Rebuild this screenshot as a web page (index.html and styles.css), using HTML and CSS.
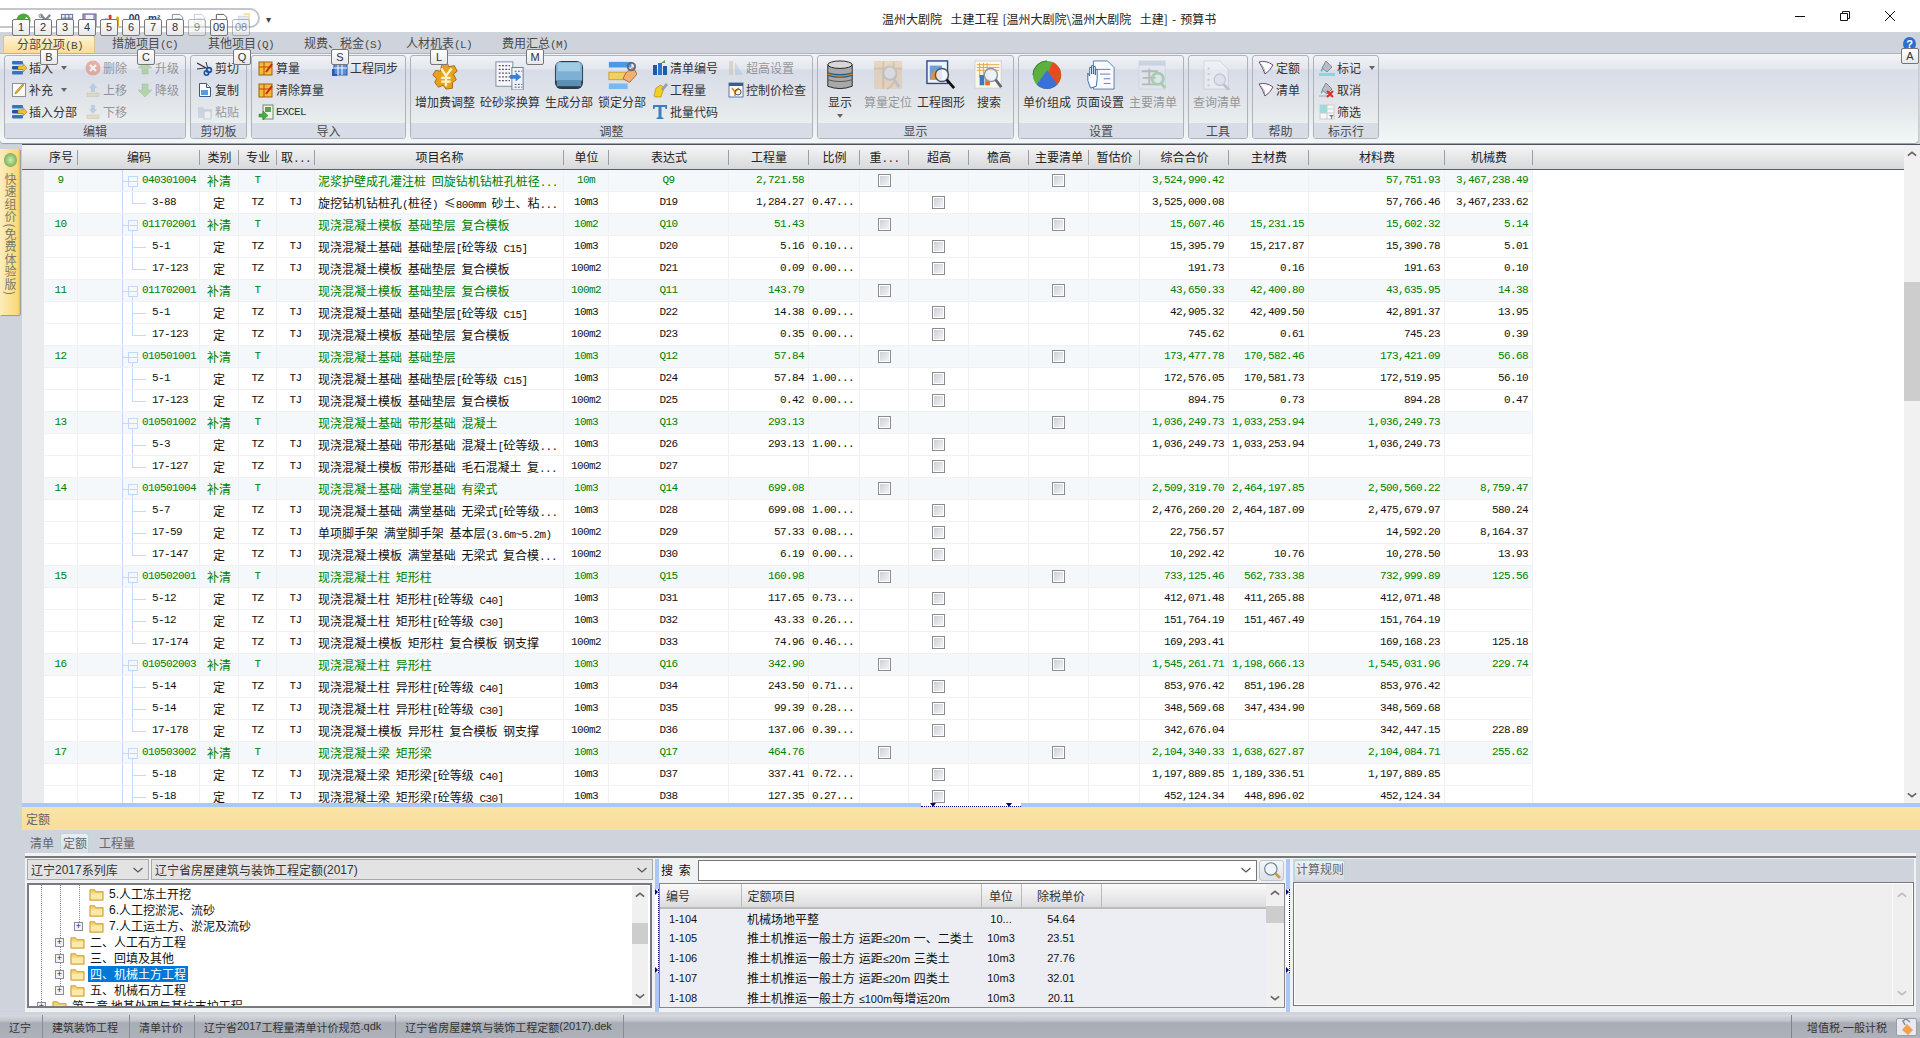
FILE: index.html
```html
<!DOCTYPE html>
<html lang="zh-CN">
<head>
<meta charset="utf-8">
<title>预算书</title>
<link rel="stylesheet" href="styles.css">
</head>
<body>
<svg class="defs" width="0" height="0">
<defs>
<symbol id="ok" viewBox="0 0 16 16"><circle cx="8" cy="8" r="7.5" fill="#4fa83a"/><path d="M4 8l3 3 5-6" stroke="#fff" stroke-width="2" fill="none"/></symbol>
<symbol id="tool" viewBox="0 0 16 16"><path d="M3 2l10 11M13 2L3 13" stroke="#808890" stroke-width="2.4"/><circle cx="3" cy="3" r="2" fill="none" stroke="#808890"/></symbol>
<symbol id="tbl" viewBox="0 0 16 16"><rect x="1.5" y="1.5" width="12" height="12" fill="#e8eef8" stroke="#5a6a90"/><path d="M1.5 5.5h12M1.5 9.500h12M5.500 1.500v12M9.500 1.500v12" stroke="#5a6a90"/></symbol>
<symbol id="flop" viewBox="0 0 16 16"><rect x="1" y="1" width="14" height="13" fill="#9a94c8" stroke="#6a6490"/><rect x="4" y="2" width="8" height="7" fill="#f4f4f8"/></symbol>
<symbol id="bars" viewBox="0 0 16 16"><rect x="1" y="6" width="3" height="8" fill="#2a62b8"/><rect x="5" y="2" width="3" height="12" fill="#d63a30"/><rect x="9" y="8" width="3" height="6" fill="#2a62b8"/><rect x="13" y="4" width="3" height="10" fill="#e8a820"/></symbol>
<symbol id="page" viewBox="0 0 16 16"><path d="M2.500 1.500h8l3 3v10h-11z" fill="#f6f8fc" stroke="#7a8aa8"/><path d="M5 6h6M5 9h6M5 12h6" stroke="#a8b4cc"/></symbol>
<symbol id="pageg" viewBox="0 0 16 16"><path d="M2.500 1.500h8l3 3v10h-11z" fill="#fdfdfd" stroke="#555"/><path d="M10 9h5v5h-5z" fill="#f4c850"/></symbol>
<symbol id="pagea" viewBox="0 0 16 16"><path d="M2.500 3.500h11v11h-11z" fill="#c4d4f0" stroke="#8aa0c8"/><path d="M8 1h6v7" fill="none" stroke="#e8c050" stroke-width="2"/></symbol>
<symbol id="ins" viewBox="0 0 16 16"><rect x="1" y="1" width="11" height="3.500" rx="1" fill="#2f76c8"/><rect x="1" y="6" width="11" height="3.500" rx="1" fill="#1d55a8"/><rect x="1" y="11" width="11" height="3.500" rx="1" fill="#2f76c8"/><path d="M7 6h5V3.500L16 8l-4 4V9.500H7z" fill="#f2c230" stroke="#8a7018" stroke-width=".5"/></symbol>
<symbol id="sup" viewBox="0 0 16 16"><rect x="1.500" y="1.500" width="13" height="13" fill="#fbfbf6" stroke="#8a8f98"/><path d="M4 12l2-1 7-8-1.500-1-7 8z" fill="#e2a838" stroke="#8a6a20" stroke-width=".5"/></symbol>
<symbol id="del" viewBox="0 0 16 16"><circle cx="8" cy="8" r="7.500" fill="#e06a48"/><path d="M5 5l6 6M11 5l-6 6" stroke="#fff" stroke-width="2.400"/></symbol>
<symbol id="mup" viewBox="0 0 16 16"><path d="M8 1l4 5H10v4H6V6H4z" fill="#8ab0d8"/><rect x="2" y="11" width="12" height="3.500" fill="#dcc890" stroke="#aa9a6a" stroke-width=".5"/></symbol>
<symbol id="mdn" viewBox="0 0 16 16"><path d="M8 10l4-5H10V1H6v4H4z" fill="#8ab0d8"/><rect x="2" y="11" width="12" height="3.500" fill="#dcc890" stroke="#aa9a6a" stroke-width=".5"/></symbol>
<symbol id="aup" viewBox="0 0 16 16"><path d="M8 2l7 6h-4v6H5V8H1z" fill="#7cc060" stroke="#5a9a40" stroke-width=".5"/></symbol>
<symbol id="adn" viewBox="0 0 16 16"><path d="M8 15l7-7h-4V2H5v6H1z" fill="#7cc060" stroke="#5a9a40" stroke-width=".5"/></symbol>
<symbol id="cut" viewBox="0 0 16 16"><path d="M0 3l11 6M0 9l8-1" stroke="#333" stroke-width="1.200"/><path d="M9 2l2 7" stroke="#333"/><circle cx="12" cy="10" r="2.400" fill="none" stroke="#1a4fa8" stroke-width="1.600"/><circle cx="9.500" cy="13" r="2.200" fill="none" stroke="#1a4fa8" stroke-width="1.600"/></symbol>
<symbol id="cpy" viewBox="0 0 16 16"><path d="M2.500 1.500h7l4 4v9h-11z" fill="#fff" stroke="#3a5a8a"/><rect x="4" y="8" width="7" height="5" fill="#5a9ae0"/><path d="M9.500 1.500v4h4" fill="#d8e4f4" stroke="#3a5a8a"/></symbol>
<symbol id="pst" viewBox="0 0 16 16"><path d="M1 3h5l1 2h8v9H1z" fill="#a8c0d8"/><rect x="7" y="7" width="7" height="8" fill="#f0f4f8" stroke="#9ab"/></symbol>
<symbol id="calc" viewBox="0 0 16 16"><rect x="1" y="2" width="13" height="13" fill="#f0c030" stroke="#a06018"/><path d="M1 7h13M6 2v13" stroke="#c84020"/><path d="M8 12l6-8" stroke="#d02020" stroke-width="2"/></symbol>
<symbol id="syn" viewBox="0 0 16 16"><rect x="2" y="4" width="13" height="11" fill="#5a8fd8" stroke="#2a5aa8"/><path d="M6 4v11M10 4v11M2 8h13" stroke="#fff"/><path d="M1 9v6h4" fill="none" stroke="#2a5aa8" stroke-width="2"/></symbol>
<symbol id="xl" viewBox="0 0 16 16"><rect x="5" y="1" width="10" height="14" fill="#eef4ea" stroke="#6a8a6a"/><rect x="7" y="3" width="6" height="5" fill="#5aa05a"/><path d="M1 10h4V7l5 4.500L5 16v-3H1z" fill="#46b03a" stroke="#2a7a20" stroke-width=".5"/></symbol>
<symbol id="yen" viewBox="0 0 32 32"><path d="M13 3l5-1 2 5 6-1 3 6-4 3 3 6-4 3v6l-7 1-3-4-5 2-4-5 2-4-4-4 3-5 5 1z" fill="#e8a020" stroke="#a86a10"/><path d="M12 9l5 8 6-8M17 17v11M12 19h10M12 23h10" stroke="#fff4c0" stroke-width="2.500" fill="none"/></symbol>
<symbol id="mor" viewBox="0 0 32 32"><rect x="1" y="2" width="18" height="26" fill="#f8f8fc" stroke="#7a8aa8"/><rect x="18" y="8" width="12" height="24" fill="#eef2fa" stroke="#6a7a98"/><path d="M4 6h12M4 10h12M4 14h12M4 18h12M4 22h12" stroke="#556" stroke-dasharray="2 1.500" stroke-width="1.500"/><path d="M21 12h8M21 26h8M21 29h8" stroke="#556" stroke-dasharray="2 1.500"/><path d="M16 16h6v-3l6 5-6 5v-3h-6z" fill="#3a80d8"/></symbol>
<symbol id="gen" viewBox="0 0 32 32"><rect x="1" y="1" width="30" height="30" rx="7" fill="#2c3a48"/><path d="M5 2h22q3 0 3 4v16H2V6q0-4 3-4z" fill="#7db0d4"/><path d="M3 22h26v6H3z" fill="#5a90b4"/><path d="M6 3h20q2 0 2 3v6H4V6q0-3 2-3z" fill="#a0cce4"/></symbol>
<symbol id="lock" viewBox="0 0 32 32"><rect x="2" y="2" width="24" height="6" fill="#4a98e8"/><rect x="2" y="13" width="20" height="8" fill="#f0d060" stroke="#c8a030"/><rect x="2" y="25" width="20" height="6" fill="#7ab8f0"/><path d="M20 14l8-6 4 7-8 9-7-4z" fill="#f0b070" stroke="#a86a30"/><circle cx="26" cy="7" r="4" fill="none" stroke="#667" stroke-width="2"/></symbol>
<symbol id="db" viewBox="0 0 32 32"><path d="M3 5h26v23q-13 5-26 0z" fill="#a8a8a8"/><ellipse cx="16" cy="5" rx="13" ry="4" fill="#d8d8d8" stroke="#222"/><path d="M3 5v23q13 5 26 0V5" fill="none" stroke="#222"/><path d="M3 13q13 4 26 0v4q-13 4-26 0z" fill="#1a5f90"/><path d="M3 15q13 4 26 0" stroke="#e08020" stroke-width="1.500" fill="none"/><path d="M3 21q13 4 26 0" stroke="#555" fill="none"/></symbol>
<symbol id="pos" viewBox="0 0 32 32"><rect x="1" y="1" width="30" height="30" fill="#e4c090"/><path d="M11 1v30M22 1v8M1 9h30M15 31q8-4 10-16" stroke="#d0905a" fill="none" stroke-width="2"/><circle cx="18" cy="14" r="7" fill="#d8d8d0" stroke="#999" stroke-width="2"/><path d="M22 20l6 9" stroke="#999" stroke-width="3"/></symbol>
<symbol id="img" viewBox="0 0 32 32"><rect x="1" y="1" width="22" height="24" fill="#eef4fc" stroke="#2a4a88" stroke-width="1.500"/><rect x="4" y="6" width="13" height="15" fill="#6ea0d8"/><path d="M5 16l5-6 5 6v5H5z" fill="#e09040"/><circle cx="17" cy="16" r="7" fill="#f4f8fc" fill-opacity=".8" stroke="#555" stroke-width="1.500"/><path d="M22 21l8 9" stroke="#111" stroke-width="3"/></symbol>
<symbol id="srch" viewBox="0 0 32 32"><rect x="1" y="1" width="28" height="29" fill="#fcf8e8" stroke="#c8d0e0"/><path d="M3 5h24M3 8h24M3 11h24M6 3v16M10 3v16M14 3v16" stroke="#e8a040"/><rect x="6" y="16" width="5" height="11" fill="#3a78c8"/><rect x="12" y="20" width="5" height="7" fill="#e06a30"/><circle cx="18" cy="16" r="7" fill="#e8f2fa" fill-opacity=".85" stroke="#8898a8" stroke-width="1.500"/><path d="M23 21l6 8" stroke="#667" stroke-width="3"/></symbol>
<symbol id="pie" viewBox="0 0 32 32"><circle cx="16" cy="16" r="15" fill="#5cb040"/><path d="M16 16L22 2a15 15 0 0 1 9 16z" fill="#e84a20"/><path d="M16 16l15 2a15 15 0 0 1-4 8z" fill="#e84a20"/><path d="M16 11l11 15a15 15 0 0 1-22 0z" fill="#3a70d8"/><path d="M16 1a15 15 0 0 0-15 15" stroke="#2a7a20" fill="none"/></symbol>
<symbol id="hand" viewBox="0 0 32 32"><path d="M9 1h15l7 7v23H9z" fill="#f8faff" stroke="#5a7ab0"/><path d="M12 10h15M16 15h11M20 20h7M20 25h7" stroke="#5a7ab0"/><path d="M6 30l-3-8V14l2 3V8h2v7-9h2v9-8h2v9-6h2v10l-1 8z" fill="#fff" stroke="#2a6ab0"/></symbol>
<symbol id="mainq" viewBox="0 0 32 32"><rect x="1" y="1" width="28" height="30" fill="#e4e8f0" stroke="#c0c8d8"/><rect x="1" y="1" width="28" height="5" fill="#a8b8d4"/><path d="M4 12h17M5 19h14M4 26h17M12 9v18" stroke="#8a8a80" stroke-width="2"/><circle cx="21" cy="20" r="6" fill="none" stroke="#68b868" stroke-width="3"/><path d="M24 24l5 6" stroke="#68b868" stroke-width="3"/></symbol>
<symbol id="qry" viewBox="0 0 32 32"><path d="M2 1h17l9 9v21H2z" fill="#f6f8fa" stroke="#b8bcc4"/><path d="M6 9h2M6 15h2M6 21h2M6 27h2" stroke="#aab" stroke-width="2"/><circle cx="19" cy="21" r="6" fill="#dfe8f2" stroke="#a8b0bc" stroke-width="1.500"/><path d="M23 26l6 6" stroke="#99a" stroke-width="3"/></symbol>
<symbol id="cod" viewBox="0 0 16 16"><rect x="1" y="5" width="4" height="10" fill="#1f5aa8"/><rect x="6" y="3" width="4" height="12" fill="#2d74c8"/><rect x="11" y="6" width="4" height="9" fill="#1f5aa8"/><path d="M9 3l4-3v3z" fill="#58a838"/></symbol>
<symbol id="qty" viewBox="0 0 16 16"><path d="M2 14l2-8 5-3 3 3-3 9H3z" fill="#f2d020" stroke="#a08010" stroke-width=".6"/><path d="M9 7l5-6 2 2-5 6z" fill="#9aa0a8"/></symbol>
<symbol id="tt" viewBox="0 0 16 16"><path d="M1 1h14v4h-1.500L13 3H9.500v10l2 1v1h-7v-1l2-1V3H3L2.500 5H1z" fill="#3a80c0"/></symbol>
<symbol id="ovr" viewBox="0 0 16 16"><path d="M7 2l8 13H7z" fill="#a8c4dc"/><rect x="1" y="1" width="4" height="14" fill="#c8bc98"/></symbol>
<symbol id="ctl" viewBox="0 0 16 16"><rect x="1" y="1" width="14" height="14" fill="#fcf8f0" stroke="#5a7ab0"/><rect x="1" y="1" width="14" height="3" fill="#3a5a98"/><path d="M4 6l3 4 4-4M7 10v4" stroke="#d88a20" stroke-width="1.500" fill="none"/><circle cx="10" cy="10" r="3" fill="none" stroke="#555"/></symbol>
<symbol id="hlp" viewBox="0 0 16 16"><path d="M1 2q7-2 14 3q-3 6-8 9q-2-6-6-12z" fill="#fff" stroke="#6a4a78"/><path d="M3 4q4 5 4 8" stroke="#aaa" fill="none"/></symbol>
<symbol id="mrk" viewBox="0 0 16 16"><rect y="13" width="16" height="3" fill="#80dcdc"/><path d="M7 1l6 6-5 5-5-4z" fill="#b8bcc4" stroke="#889"/><path d="M3 8q-2 2-1 4l2-2" fill="#3ac0c8"/></symbol>
<symbol id="mrx" viewBox="0 0 16 16"><rect y="13" width="12" height="2" fill="#c0c4cc"/><path d="M7 1l6 6-5 5-5-4z" fill="#b8bcc4" stroke="#889"/><path d="M3 8q-2 2-1 4l2-2" fill="#3ac0c8"/><path d="M8 9l6 6M14 9l-6 6" stroke="#e02a20" stroke-width="2"/></symbol>
<symbol id="flt" viewBox="0 0 16 16"><rect x="1" y="1" width="14" height="14" fill="#f8f8f8" stroke="#ccc"/><rect x="1" y="1" width="7" height="8" fill="#90e0e0"/><path d="M1 5h14M1 9h14M8 1v14" stroke="#ccc"/><path d="M10 11h5l-2 2v2h-1v-2z" fill="#778"/></symbol>
<symbol id="fold" viewBox="0 0 16 16"><path d="M1 3h5l1 2h8v9H1z" fill="#f6d470" stroke="#c89828"/><path d="M2 7h12v6H2z" fill="#fdeaa8"/></symbol>
<symbol id="chev" viewBox="0 0 12 8"><path d="M1 6l5-4 5 4" fill="none" stroke="currentColor" stroke-width="2"/></symbol>
<symbol id="chvd" viewBox="0 0 12 8"><path d="M1.500 2l4.500 4 4.500-4" fill="none" stroke="currentColor" stroke-width="1.200"/></symbol>
<symbol id="mag" viewBox="0 0 16 16"><circle cx="7" cy="7" r="5.500" fill="#f0f4f8" stroke="#6a8098"/><path d="M11 11l4 4" stroke="#c8a030" stroke-width="2.500"/></symbol>
<symbol id="pay" viewBox="0 0 16 16"><path d="M8 5l6 6-5 5-6-5z" fill="#f0a050"/><path d="M6 6l-2-4 3-2 4 3" fill="none" stroke="#889" stroke-width="1.500"/></symbol>
</defs>
</svg>

<div class="app">
  <header class="titlebar">
    <div class="qat">
      <svg class="q15"><use href="#ok"/></svg>
      <svg class="q15"><use href="#tool"/></svg>
      <svg class="q15"><use href="#tbl"/></svg>
      <svg class="q15"><use href="#flop"/></svg>
      <svg class="q15"><use href="#bars"/></svg>
      <span class="qtxt">.00</span>
      <span class="qtxt">m²</span>
      <svg class="q15"><use href="#page"/></svg>
      <svg class="q15 off"><use href="#page"/></svg>
      <svg class="q15"><use href="#pageg"/></svg>
      <svg class="q15 off"><use href="#pagea"/></svg>
    </div>
    <span class="qcar">▾</span>
    <div class="title">温州大剧院  土建工程 [温州大剧院\温州大剧院  土建] - 预算书</div>
    <div class="winbtns">
      <span class="wb"><svg width="12" height="12"><path d="M1 6.500h10" stroke="#111"/></svg></span>
      <span class="wb"><svg width="12" height="12"><path d="M1.500 3.500h7v7h-7zM3.500 3.500v-2h7v7h-2" fill="none" stroke="#111"/></svg></span>
      <span class="wb"><svg width="12" height="12"><path d="M1 1l10 10M11 1L1 11" stroke="#111"/></svg></span>
    </div>
  </header>

  <nav class="tabs">
    <span class="tab on">分部分项<i>(B)</i></span>
    <span class="tab">措施项目<i>(C)</i></span>
    <span class="tab">其他项目<i>(Q)</i></span>
    <span class="tab">规费、税金<i>(S)</i></span>
    <span class="tab">人材机表<i>(L)</i></span>
    <span class="tab">费用汇总<i>(M)</i></span>
    <span class="help">?</span>
  </nav>

  <section class="ribbon">
    <div class="grp g-edit">
      <div class="gb">
        <div class="col w74">
          <div class="it"><svg class="ic"><use href="#ins"/></svg>插入<b class="car"></b></div>
          <div class="it"><svg class="ic"><use href="#sup"/></svg>补充<b class="car"></b></div>
          <div class="it"><svg class="ic"><use href="#ins"/></svg>插入分部</div>
        </div>
        <div class="col w52">
          <div class="it off"><svg class="ic"><use href="#del"/></svg>删除</div>
          <div class="it off"><svg class="ic"><use href="#mup"/></svg>上移</div>
          <div class="it off"><svg class="ic"><use href="#mdn"/></svg>下移</div>
        </div>
        <div class="col">
          <div class="it off"><svg class="ic"><use href="#aup"/></svg>升级</div>
          <div class="it off"><svg class="ic"><use href="#adn"/></svg>降级</div>
        </div>
      </div>
      <div class="gl">编辑</div>
    </div>
    <div class="grp g-clip">
      <div class="gb">
        <div class="col">
          <div class="it"><svg class="ic"><use href="#cut"/></svg>剪切</div>
          <div class="it"><svg class="ic"><use href="#cpy"/></svg>复制</div>
          <div class="it off"><svg class="ic"><use href="#pst"/></svg>粘贴</div>
        </div>
      </div>
      <div class="gl">剪切板</div>
    </div>
    <div class="grp g-imp">
      <div class="gb">
        <div class="col w74">
          <div class="it"><svg class="ic"><use href="#calc"/></svg>算量</div>
          <div class="it nw"><svg class="ic"><use href="#calc"/></svg>清除算量</div>
          <div class="it"><svg class="ic"><use href="#xl"/></svg><i>EXCEL</i></div>
        </div>
        <div class="col">
          <div class="it"><svg class="ic"><use href="#syn"/></svg>工程同步</div>
        </div>
      </div>
      <div class="gl">导入</div>
    </div>
    <div class="grp g-adj">
      <div class="gb">
        <div class="big"><svg class="lg"><use href="#yen"/></svg>增加费调整</div>
        <div class="big"><svg class="lg"><use href="#mor"/></svg>砼砂浆换算</div>
        <div class="big"><svg class="lg"><use href="#gen"/></svg>生成分部</div>
        <div class="big"><svg class="lg"><use href="#lock"/></svg>锁定分部</div>
        <div class="col w76 ml1">
          <div class="it"><svg class="ic"><use href="#cod"/></svg>清单编号</div>
          <div class="it"><svg class="ic"><use href="#qty"/></svg>工程量</div>
          <div class="it"><svg class="ic"><use href="#tt"/></svg>批量代码</div>
        </div>
        <div class="col">
          <div class="it off"><svg class="ic"><use href="#ovr"/></svg>超高设置</div>
          <div class="it"><svg class="ic"><use href="#ctl"/></svg>控制价检查</div>
        </div>
      </div>
      <div class="gl">调整</div>
    </div>
    <div class="grp g-shw">
      <div class="gb">
        <div class="big s"><svg class="lg"><use href="#db"/></svg>显示<b class="car mid"></b></div>
        <div class="big off"><svg class="lg"><use href="#pos"/></svg>算量定位</div>
        <div class="big"><svg class="lg"><use href="#img"/></svg>工程图形</div>
        <div class="big s"><svg class="lg"><use href="#srch"/></svg>搜索</div>
      </div>
      <div class="gl">显示</div>
    </div>
    <div class="grp g-set">
      <div class="gb">
        <div class="big"><svg class="lg"><use href="#pie"/></svg>单价组成</div>
        <div class="big"><svg class="lg"><use href="#hand"/></svg>页面设置</div>
        <div class="big off"><svg class="lg"><use href="#mainq"/></svg>主要清单</div>
      </div>
      <div class="gl">设置</div>
    </div>
    <div class="grp g-tool">
      <div class="gb">
        <div class="big off"><svg class="lg"><use href="#qry"/></svg>查询清单</div>
      </div>
      <div class="gl">工具</div>
    </div>
    <div class="grp g-help">
      <div class="gb">
        <div class="col">
          <div class="it"><svg class="ic"><use href="#hlp"/></svg>定额</div>
          <div class="it"><svg class="ic"><use href="#hlp"/></svg>清单</div>
        </div>
      </div>
      <div class="gl">帮助</div>
    </div>
    <div class="grp g-mark">
      <div class="gb">
        <div class="col">
          <div class="it"><svg class="ic"><use href="#mrk"/></svg>标记<b class="car"></b></div>
          <div class="it"><svg class="ic"><use href="#mrx"/></svg>取消</div>
          <div class="it"><svg class="ic"><use href="#flt"/></svg>筛选</div>
        </div>
      </div>
      <div class="gl">标示行</div>
    </div>
  </section>

  <main class="main">
    <aside class="side">
      <div class="quick">
        <span class="ball"></span>
        <span class="qtext">快速组价(免费体验版)</span>
      </div>
    </aside>
    <div class="content">
      <div class="gridrow">
        <div class="gutter"></div>
        <div class="tablewrap">
          <table class="dt">
            <colgroup>
              <col class="c1"><col class="c2"><col class="c3"><col class="c3b"><col class="c3b"><col class="c4"><col class="c5"><col class="c6"><col class="c7"><col class="c8"><col class="c9"><col class="c10"><col class="c10"><col class="c10"><col class="c11"><col class="c12"><col class="c13"><col class="c14"><col class="c15">
            </colgroup>
            <thead>
              <tr><th>序号</th><th>编码</th><th>类别</th><th>专业</th><th>取<i>...</i></th><th>项目名称</th><th>单位</th><th>表达式</th><th>工程量</th><th>比例</th><th>重<i>...</i></th><th>超高</th><th>檐高</th><th>主要清单</th><th>暂估价</th><th>综合合价</th><th>主材费</th><th>材料费</th><th>机械费</th></tr>
            </thead>
            <tbody>
<tr class="q"><td>9</td><td class="p">040301004</td><td>补清</td><td>T</td><td></td><td>泥浆护壁成孔灌注桩 回旋钻机钻桩孔桩径<i>...</i></td><td>10m</td><td>Q9</td><td>2,721.58</td><td></td><td><b class="ck"></b></td><td></td><td></td><td><b class="ck"></b></td><td></td><td>3,524,990.42</td><td></td><td>57,751.93</td><td>3,467,238.49</td></tr>
<tr><td></td><td class="e">3-88</td><td>定</td><td>TZ</td><td>TJ</td><td>旋挖钻机钻桩孔<i>(</i>桩径<i>)</i> ≤<i>800mm</i> 砂土、粘<i>...</i></td><td>10m3</td><td>D19</td><td>1,284.27</td><td>0.47...</td><td></td><td><b class="ck"></b></td><td></td><td></td><td></td><td>3,525,000.08</td><td></td><td>57,766.46</td><td>3,467,233.62</td></tr>
<tr class="q"><td>10</td><td class="p">011702001</td><td>补清</td><td>T</td><td></td><td>现浇混凝土模板 基础垫层 复合模板</td><td>10m2</td><td>Q10</td><td>51.43</td><td></td><td><b class="ck"></b></td><td></td><td></td><td><b class="ck"></b></td><td></td><td>15,607.46</td><td>15,231.15</td><td>15,602.32</td><td>5.14</td></tr>
<tr><td></td><td class="m">5-1</td><td>定</td><td>TZ</td><td>TJ</td><td>现浇混凝土基础 基础垫层<i>[</i>砼等级 <i>C15]</i></td><td>10m3</td><td>D20</td><td>5.16</td><td>0.10...</td><td></td><td><b class="ck"></b></td><td></td><td></td><td></td><td>15,395.79</td><td>15,217.87</td><td>15,390.78</td><td>5.01</td></tr>
<tr><td></td><td class="e">17-123</td><td>定</td><td>TZ</td><td>TJ</td><td>现浇混凝土模板 基础垫层 复合模板</td><td>100m2</td><td>D21</td><td>0.09</td><td>0.00...</td><td></td><td><b class="ck"></b></td><td></td><td></td><td></td><td>191.73</td><td>0.16</td><td>191.63</td><td>0.10</td></tr>
<tr class="q"><td>11</td><td class="p">011702001</td><td>补清</td><td>T</td><td></td><td>现浇混凝土模板 基础垫层 复合模板</td><td>100m2</td><td>Q11</td><td>143.79</td><td></td><td><b class="ck"></b></td><td></td><td></td><td><b class="ck"></b></td><td></td><td>43,650.33</td><td>42,400.80</td><td>43,635.95</td><td>14.38</td></tr>
<tr><td></td><td class="m">5-1</td><td>定</td><td>TZ</td><td>TJ</td><td>现浇混凝土基础 基础垫层<i>[</i>砼等级 <i>C15]</i></td><td>10m3</td><td>D22</td><td>14.38</td><td>0.09...</td><td></td><td><b class="ck"></b></td><td></td><td></td><td></td><td>42,905.32</td><td>42,409.50</td><td>42,891.37</td><td>13.95</td></tr>
<tr><td></td><td class="e">17-123</td><td>定</td><td>TZ</td><td>TJ</td><td>现浇混凝土模板 基础垫层 复合模板</td><td>100m2</td><td>D23</td><td>0.35</td><td>0.00...</td><td></td><td><b class="ck"></b></td><td></td><td></td><td></td><td>745.62</td><td>0.61</td><td>745.23</td><td>0.39</td></tr>
<tr class="q"><td>12</td><td class="p">010501001</td><td>补清</td><td>T</td><td></td><td>现浇混凝土基础 基础垫层</td><td>10m3</td><td>Q12</td><td>57.84</td><td></td><td><b class="ck"></b></td><td></td><td></td><td><b class="ck"></b></td><td></td><td>173,477.78</td><td>170,582.46</td><td>173,421.09</td><td>56.68</td></tr>
<tr><td></td><td class="m">5-1</td><td>定</td><td>TZ</td><td>TJ</td><td>现浇混凝土基础 基础垫层<i>[</i>砼等级 <i>C15]</i></td><td>10m3</td><td>D24</td><td>57.84</td><td>1.00...</td><td></td><td><b class="ck"></b></td><td></td><td></td><td></td><td>172,576.05</td><td>170,581.73</td><td>172,519.95</td><td>56.10</td></tr>
<tr><td></td><td class="e">17-123</td><td>定</td><td>TZ</td><td>TJ</td><td>现浇混凝土模板 基础垫层 复合模板</td><td>100m2</td><td>D25</td><td>0.42</td><td>0.00...</td><td></td><td><b class="ck"></b></td><td></td><td></td><td></td><td>894.75</td><td>0.73</td><td>894.28</td><td>0.47</td></tr>
<tr class="q"><td>13</td><td class="p">010501002</td><td>补清</td><td>T</td><td></td><td>现浇混凝土基础 带形基础 混凝土</td><td>10m3</td><td>Q13</td><td>293.13</td><td></td><td><b class="ck"></b></td><td></td><td></td><td><b class="ck"></b></td><td></td><td>1,036,249.73</td><td>1,033,253.94</td><td>1,036,249.73</td><td></td></tr>
<tr><td></td><td class="m">5-3</td><td>定</td><td>TZ</td><td>TJ</td><td>现浇混凝土基础 带形基础 混凝土<i>[</i>砼等级<i>...</i></td><td>10m3</td><td>D26</td><td>293.13</td><td>1.00...</td><td></td><td><b class="ck"></b></td><td></td><td></td><td></td><td>1,036,249.73</td><td>1,033,253.94</td><td>1,036,249.73</td><td></td></tr>
<tr><td></td><td class="e">17-127</td><td>定</td><td>TZ</td><td>TJ</td><td>现浇混凝土模板 带形基础 毛石混凝土 复<i>...</i></td><td>100m2</td><td>D27</td><td></td><td></td><td></td><td><b class="ck"></b></td><td></td><td></td><td></td><td></td><td></td><td></td><td></td></tr>
<tr class="q"><td>14</td><td class="p">010501004</td><td>补清</td><td>T</td><td></td><td>现浇混凝土基础 满堂基础 有梁式</td><td>10m3</td><td>Q14</td><td>699.08</td><td></td><td><b class="ck"></b></td><td></td><td></td><td><b class="ck"></b></td><td></td><td>2,509,319.70</td><td>2,464,197.85</td><td>2,500,560.22</td><td>8,759.47</td></tr>
<tr><td></td><td class="m">5-7</td><td>定</td><td>TZ</td><td>TJ</td><td>现浇混凝土基础 满堂基础 无梁式<i>[</i>砼等级<i>...</i></td><td>10m3</td><td>D28</td><td>699.08</td><td>1.00...</td><td></td><td><b class="ck"></b></td><td></td><td></td><td></td><td>2,476,260.20</td><td>2,464,187.09</td><td>2,475,679.97</td><td>580.24</td></tr>
<tr><td></td><td class="m">17-59</td><td>定</td><td>TZ</td><td>TJ</td><td>单项脚手架 满堂脚手架 基本层<i>(3.6m~5.2m)</i></td><td>100m2</td><td>D29</td><td>57.33</td><td>0.08...</td><td></td><td><b class="ck"></b></td><td></td><td></td><td></td><td>22,756.57</td><td></td><td>14,592.20</td><td>8,164.37</td></tr>
<tr><td></td><td class="e">17-147</td><td>定</td><td>TZ</td><td>TJ</td><td>现浇混凝土模板 满堂基础 无梁式 复合模<i>...</i></td><td>100m2</td><td>D30</td><td>6.19</td><td>0.00...</td><td></td><td><b class="ck"></b></td><td></td><td></td><td></td><td>10,292.42</td><td>10.76</td><td>10,278.50</td><td>13.93</td></tr>
<tr class="q"><td>15</td><td class="p">010502001</td><td>补清</td><td>T</td><td></td><td>现浇混凝土柱 矩形柱</td><td>10m3</td><td>Q15</td><td>160.98</td><td></td><td><b class="ck"></b></td><td></td><td></td><td><b class="ck"></b></td><td></td><td>733,125.46</td><td>562,733.38</td><td>732,999.89</td><td>125.56</td></tr>
<tr><td></td><td class="m">5-12</td><td>定</td><td>TZ</td><td>TJ</td><td>现浇混凝土柱 矩形柱<i>[</i>砼等级 <i>C40]</i></td><td>10m3</td><td>D31</td><td>117.65</td><td>0.73...</td><td></td><td><b class="ck"></b></td><td></td><td></td><td></td><td>412,071.48</td><td>411,265.88</td><td>412,071.48</td><td></td></tr>
<tr><td></td><td class="m">5-12</td><td>定</td><td>TZ</td><td>TJ</td><td>现浇混凝土柱 矩形柱<i>[</i>砼等级 <i>C30]</i></td><td>10m3</td><td>D32</td><td>43.33</td><td>0.26...</td><td></td><td><b class="ck"></b></td><td></td><td></td><td></td><td>151,764.19</td><td>151,467.49</td><td>151,764.19</td><td></td></tr>
<tr><td></td><td class="e">17-174</td><td>定</td><td>TZ</td><td>TJ</td><td>现浇混凝土模板 矩形柱 复合模板 钢支撑</td><td>100m2</td><td>D33</td><td>74.96</td><td>0.46...</td><td></td><td><b class="ck"></b></td><td></td><td></td><td></td><td>169,293.41</td><td></td><td>169,168.23</td><td>125.18</td></tr>
<tr class="q"><td>16</td><td class="p">010502003</td><td>补清</td><td>T</td><td></td><td>现浇混凝土柱 异形柱</td><td>10m3</td><td>Q16</td><td>342.90</td><td></td><td><b class="ck"></b></td><td></td><td></td><td><b class="ck"></b></td><td></td><td>1,545,261.71</td><td>1,198,666.13</td><td>1,545,031.96</td><td>229.74</td></tr>
<tr><td></td><td class="m">5-14</td><td>定</td><td>TZ</td><td>TJ</td><td>现浇混凝土柱 异形柱<i>[</i>砼等级 <i>C40]</i></td><td>10m3</td><td>D34</td><td>243.50</td><td>0.71...</td><td></td><td><b class="ck"></b></td><td></td><td></td><td></td><td>853,976.42</td><td>851,196.28</td><td>853,976.42</td><td></td></tr>
<tr><td></td><td class="m">5-14</td><td>定</td><td>TZ</td><td>TJ</td><td>现浇混凝土柱 异形柱<i>[</i>砼等级 <i>C30]</i></td><td>10m3</td><td>D35</td><td>99.39</td><td>0.28...</td><td></td><td><b class="ck"></b></td><td></td><td></td><td></td><td>348,569.68</td><td>347,434.90</td><td>348,569.68</td><td></td></tr>
<tr><td></td><td class="e">17-178</td><td>定</td><td>TZ</td><td>TJ</td><td>现浇混凝土模板 异形柱 复合模板 钢支撑</td><td>100m2</td><td>D36</td><td>137.06</td><td>0.39...</td><td></td><td><b class="ck"></b></td><td></td><td></td><td></td><td>342,676.04</td><td></td><td>342,447.15</td><td>228.89</td></tr>
<tr class="q"><td>17</td><td class="p">010503002</td><td>补清</td><td>T</td><td></td><td>现浇混凝土梁 矩形梁</td><td>10m3</td><td>Q17</td><td>464.76</td><td></td><td><b class="ck"></b></td><td></td><td></td><td><b class="ck"></b></td><td></td><td>2,104,340.33</td><td>1,638,627.87</td><td>2,104,084.71</td><td>255.62</td></tr>
<tr><td></td><td class="m">5-18</td><td>定</td><td>TZ</td><td>TJ</td><td>现浇混凝土梁 矩形梁<i>[</i>砼等级 <i>C40]</i></td><td>10m3</td><td>D37</td><td>337.41</td><td>0.72...</td><td></td><td><b class="ck"></b></td><td></td><td></td><td></td><td>1,197,889.85</td><td>1,189,336.51</td><td>1,197,889.85</td><td></td></tr>
<tr><td></td><td class="m">5-18</td><td>定</td><td>TZ</td><td>TJ</td><td>现浇混凝土梁 矩形梁<i>[</i>砼等级 <i>C30]</i></td><td>10m3</td><td>D38</td><td>127.35</td><td>0.27...</td><td></td><td><b class="ck"></b></td><td></td><td></td><td></td><td>452,124.34</td><td>448,896.02</td><td>452,124.34</td><td></td></tr>
            </tbody>
          </table>
        </div>
        <div class="vs main-vs">
          <svg class="cv"><use href="#chev"/></svg>
          <div class="thumb"></div>
          <svg class="cv dn"><use href="#chev"/></svg>
        </div>
      </div>

      <div class="hsplit"><span class="grip"></span></div>
      <div class="ybar">定额</div>
      <div class="ltabs">
        <span class="lt">清单</span>
        <span class="lt on">定额</span>
        <span class="lt">工程量</span>
      </div>

      <div class="lower">
        <div class="pane pl">
          <div class="combos">
            <div class="combo cb1">辽宁<i class="s">2017</i>系列库<svg class="cd"><use href="#chvd"/></svg></div>
            <div class="combo cb2">辽宁省房屋建筑与装饰工程定额<i class="s">(2017)</i><svg class="cd"><use href="#chvd"/></svg></div>
          </div>
          <div class="tree">
            <div class="trows">
              <div class="tn d3"><span class="ex no"></span><svg class="fd"><use href="#fold"/></svg><i class="s">5.</i>人工冻土开挖</div>
              <div class="tn d3"><span class="ex no"></span><svg class="fd"><use href="#fold"/></svg><i class="s">6.</i>人工挖淤泥、流砂</div>
              <div class="tn d3"><span class="ex">+</span><svg class="fd"><use href="#fold"/></svg><i class="s">7.</i>人工运土方、淤泥及流砂</div>
              <div class="tn d2"><span class="ex">+</span><svg class="fd"><use href="#fold"/></svg>二、人工石方工程</div>
              <div class="tn d2"><span class="ex">+</span><svg class="fd"><use href="#fold"/></svg>三、回填及其他</div>
              <div class="tn d2"><span class="ex">+</span><svg class="fd"><use href="#fold"/></svg><span class="sel">四、机械土方工程</span></div>
              <div class="tn d2"><span class="ex">+</span><svg class="fd"><use href="#fold"/></svg>五、机械石方工程</div>
              <div class="tn d1"><span class="ex">+</span><svg class="fd"><use href="#fold"/></svg>第二章 地基处理与基坑支护工程</div>
            </div>
            <div class="vs tree-vs">
              <svg class="cv"><use href="#chev"/></svg>
              <div class="thumb"></div>
              <svg class="cv dn"><use href="#chev"/></svg>
            </div>
          </div>
        </div>
        <div class="vsplit"><span class="gripv"></span></div>
        <div class="pane pm">
          <div class="searchrow">
            <span class="slabel">搜 索</span>
            <div class="sinput"><svg class="cd"><use href="#chvd"/></svg></div>
            <span class="sbtn"><svg width="18" height="18"><use href="#mag"/></svg></span>
          </div>
          <div class="listbox">
            <div class="listwrap">
              <table class="lst">
                <colgroup><col class="l1"><col class="l2"><col class="l3"><col class="l4"><col></colgroup>
                <thead><tr><th>编号</th><th>定额项目</th><th>单位</th><th>除税单价</th><th></th></tr></thead>
                <tbody>
                  <tr><td>1-104</td><td>机械场地平整</td><td>10...</td><td>54.64</td><td></td></tr>
                  <tr><td>1-105</td><td>推土机推运一般土方 运距<i class="s">≤20m</i> 一、二类土</td><td>10m3</td><td>23.51</td><td></td></tr>
                  <tr><td>1-106</td><td>推土机推运一般土方 运距<i class="s">≤20m</i> 三类土</td><td>10m3</td><td>27.76</td><td></td></tr>
                  <tr><td>1-107</td><td>推土机推运一般土方 运距<i class="s">≤20m</i> 四类土</td><td>10m3</td><td>32.01</td><td></td></tr>
                  <tr><td>1-108</td><td>推土机推运一般土方 <i class="s">≤100m</i>每增运<i class="s">20m</i></td><td>10m3</td><td>20.11</td><td></td></tr>
                </tbody>
              </table>
            </div>
            <div class="vs list-vs">
              <svg class="cv"><use href="#chev"/></svg>
              <div class="thumb"></div>
              <svg class="cv dn"><use href="#chev"/></svg>
            </div>
          </div>
        </div>
        <div class="vsplit"><span class="gripv"></span></div>
        <div class="pane pr">
          <div class="rtabs"><span class="rt">计算规则</span></div>
          <div class="rbox">
            <div class="vs r-vs">
              <svg class="cv"><use href="#chev"/></svg>
              <svg class="cv dn"><use href="#chev"/></svg>
            </div>
          </div>
        </div>
      </div>
    </div>
  </main>

  <footer class="status">
    <span class="si">辽宁</span>
    <span class="si">建筑装饰工程</span>
    <span class="si">清单计价</span>
    <span class="si">辽宁省<i class="s">2017</i>工程量清单计价规范<i class="s">.qdk</i></span>
    <span class="si">辽宁省房屋建筑与装饰工程定额<i class="s">(2017).dek</i></span>
    <span class="tax">增值税.一般计税</span>
    <span class="paybtn"><svg width="16" height="16"><use href="#pay"/></svg></span>
  </footer>

  <div class="kq">
    <span class="kt">1</span><span class="kt">2</span><span class="kt">3</span><span class="kt">4</span><span class="kt">5</span><span class="kt">6</span><span class="kt">7</span><span class="kt">8</span><span class="kt kf">9</span><span class="kt">09</span><span class="kt kf">08</span>
  </div>
  <span class="kt ka kb">B</span>
  <span class="kt ka kc">C</span>
  <span class="kt ka kqq">Q</span>
  <span class="kt ka ks">S</span>
  <span class="kt ka kl">L</span>
  <span class="kt ka km">M</span>
  <span class="kt ka kaa">A</span>
</div>
</body>
</html>
```
FILE: styles.css
```css
* { box-sizing: border-box; }
html, body { margin: 0; height: 100%; overflow: hidden; }
body { font: 12px/16px "Noto Sans CJK SC", "Liberation Sans", sans-serif; color: #333; word-spacing: 3px; }
.defs { position: absolute; }
i { font: 11px/1 "Liberation Mono", monospace; letter-spacing: -.6px; font-style: normal; word-spacing: 0; }
i.s { font: 12px/1 "Liberation Sans", sans-serif; letter-spacing: 0; }
b { font-weight: normal; }
.off { opacity: .45; }

.app { position: relative; display: flex; flex-direction: column; width: 1920px; height: 1038px; background: #cfd3dc; overflow: hidden; }

/* title bar */
.titlebar { flex: none; height: 32px; background: #fff; display: flex; align-items: flex-start; }
.qat { width: 270px; height: 20px; margin: 8px 0 0 -10px; padding: 3px 0 0 24px; border: 2px solid #c4c6cc; border-radius: 0 11px 11px 10px; display: flex; gap: 7px; align-items: flex-start; flex: none; }
.q15 { width: 15px; height: 15px; flex: none; }
.qtxt { font: bold 10px/12px "Liberation Sans", sans-serif; color: #223a7a; width: 15px; flex: none; }
.qcar { margin: 11px 0 0 6px; font-size: 10px; color: #444; flex: none; }
.title { margin: 11px 0 0 611px; font-size: 12px; white-space: pre; color: #222; word-spacing: 1.5px; line-height: 16px; width: 334px; flex: none; }
.winbtns { margin-left: auto; padding-right: 8px; display: flex; }
.wb { width: 45px; height: 32px; display: flex; align-items: center; justify-content: center; }

/* tabs */
.tabs { flex: none; height: 21px; display: flex; padding-left: 1px; align-items: flex-end; }
.tab { width: 96px; height: 18px; padding-left: 15px; color: #4a4a4a; white-space: nowrap; line-height: 16px; word-spacing: 0; }
.tab:nth-child(4) { width: 102px; }
.tab.on { width: 92px; margin: 0 2px; padding-left: 13px; background: linear-gradient(#fff3d6, #fbdc94); border: 1px solid #d8c48c; border-bottom: 0; border-radius: 3px 3px 0 0; }
.help { margin: 0 4px 2px auto; width: 13px; height: 14px; border-radius: 50%; background: #2a6fd0; color: #fff; font: bold 11px/14px "Liberation Sans", sans-serif; text-align: center; }

/* ribbon */
.ribbon { flex: none; height: 90px; width: 1918px; display: flex; gap: 4px; padding: 1px 0 0 4px; border-radius: 0 0 4px 4px; background: linear-gradient(#f2f4f7 0, #e3e6ee 15px, #d8dce8 16px, #e4e8ea 55px, #f2f8f8 100%); box-shadow: 0 1px 1px #9a9ea6; border-top: 1px solid #aeb2ba; }
.grp { height: 84px; display: flex; flex-direction: column; border: 1px solid #aeb3ba; border-radius: 3px; flex: none; }
.gb { flex: 1; display: flex; padding: 1px 0 0 6px; min-height: 0; }
.gl { flex: none; height: 15px; text-align: center; line-height: 15px; background: #d7dce7; color: #4a4a4a; border-radius: 0 0 3px 3px; }
.g-edit { width: 182px; } .g-clip { width: 57px; } .g-imp { width: 155px; } .g-adj { width: 403px; }
.g-shw { width: 197px; } .g-set { width: 166px; } .g-tool { width: 60px; } .g-help { width: 57px; } .g-mark { width: 66px; }
.g-adj .gb, .g-set .gb, .g-tool .gb { padding-left: 4px; }
.g-shw .gb { padding-left: 3px; }
.g-help .gb, .g-mark .gb { padding-left: 5px; }
.col { display: flex; flex-direction: column; flex: none; }
.w74 { width: 74px; } .w52 { width: 52px; } .w76 { width: 76px; }
.ml1 { margin-left: 1px; }
.it { height: 22px; display: flex; align-items: center; gap: 2px; white-space: nowrap; color: #333; word-spacing: 0; }
.ic { width: 16px; height: 16px; flex: none; }
.car { width: 0; height: 0; margin-left: 6px; border: 3px solid transparent; border-top: 4px solid #666; border-bottom: 0; }
.big { width: 48px; margin-right: 5px; padding-top: 3px; display: flex; flex-direction: column; align-items: center; white-space: nowrap; color: #333; flex: none; word-spacing: 0; }
.g-adj .big:nth-child(-n+2) { width: 60px; }
.big.s { width: 24px; margin: 0 12px 0 7px; }
.lg { width: 30px; height: 30px; margin-bottom: 4px; flex: none; }
.car.mid { margin: 4px 0 0; }

/* main */
.main { flex: 1; min-height: 0; display: flex; }
.side { flex: none; width: 22px; padding-top: 6px; }
.quick { width: 20px; height: 166px; display: flex; flex-direction: column; align-items: center; padding-top: 4px; background: linear-gradient(90deg, #fdedbc, #fbd878 90%, #e8b84c); border-radius: 0 0 2px 0; box-shadow: 1px 1px 1px #999; }
.ball { width: 13px; height: 14px; border-radius: 50%; background: radial-gradient(#cfeeaa, #7cb060 70%, #9aa); flex: none; }
.qtext { writing-mode: vertical-rl; margin-top: 6px; color: #7a7a6a; line-height: 12px; height: 124px; white-space: nowrap; letter-spacing: .6px; word-spacing: 0; }
.content { flex: 1; min-width: 0; display: flex; flex-direction: column; }

.gridrow { flex: none; height: 659px; margin-top: 1px; display: flex; border-top: 1px solid #4d535e; background: linear-gradient(#5a5f69, #5a5f69) 0 24px / calc(100% - 16px) 1px no-repeat, linear-gradient(#f6f6f7, #d6d7da) 0 0 / 100% 25px no-repeat, #fff; }
.gutter { flex: none; width: 22px; margin-top: 25px; background: #e9ebed; }
.tablewrap { flex: 1; min-width: 0; overflow: hidden; }
.dt { width: 1489px; table-layout: fixed; border-collapse: separate; border-spacing: 0; font: 11px/21px "Liberation Mono", monospace; letter-spacing: -.6px; color: #111; word-spacing: 0; }
.c1 { width: 34px; } .c2 { width: 122px; } .c3 { width: 39px; } .c3b { width: 38px; } .c4 { width: 249px; } .c5 { width: 45px; } .c6 { width: 120px; } .c7 { width: 80px; } .c8 { width: 51px; } .c9 { width: 49px; } .c10 { width: 60px; } .c11 { width: 51px; } .c12 { width: 89px; } .c13 { width: 80px; } .c14 { width: 136px; } .c15 { width: 88px; }
.dt th { height: 25px; padding: 0 0 1px; font: 12px/16px "Noto Sans CJK SC", sans-serif; letter-spacing: 0; color: #222; background: linear-gradient(#9aa0a8, #9aa0a8) right 5px / 1px 15px no-repeat; white-space: nowrap; overflow: hidden; }
.dt tbody tr { height: 22px; }
.dt td { padding: 0; height: 22px; border-right: 1px solid #eff1f3; border-bottom: 1px solid #eff1f3; white-space: nowrap; overflow: hidden; text-align: center; }
.dt td:nth-child(3), .dt td:nth-child(6) { font: 12px/21px "Noto Sans CJK SC", sans-serif; letter-spacing: 0; word-spacing: 3px; }
.dt td:nth-child(6) { text-align: left; padding-left: 3px; }
.dt td:nth-child(9), .dt td:nth-child(n+16) { text-align: right; padding-right: 4px; }
.dt td:nth-child(10) { text-align: left; padding-left: 3px; }
.dt tr.q { background: #f4f8fb; color: #008000; }
.dt td:nth-child(2) { text-align: left; --l: linear-gradient(#c5d8f6, #c5d8f6); }
.dt td.m { padding-left: 74px; background: var(--l) 44px 0 / 1px 100% no-repeat, var(--l) 54px 0 / 1px 100% no-repeat, var(--l) 54px 11px / 14px 1px no-repeat; }
.dt td.e { padding-left: 74px; background: var(--l) 44px 0 / 1px 100% no-repeat, var(--l) 54px 0 / 1px 12px no-repeat, var(--l) 54px 11px / 14px 1px no-repeat; }
.dt td.p { padding-left: 64px; background: var(--l) 44px 0 / 1px 100% no-repeat, var(--l) 44px 11px / 16px 1px no-repeat, var(--l) 50px 6px / 10px 1px no-repeat, var(--l) 50px 16px / 10px 1px no-repeat, var(--l) 50px 6px / 1px 11px no-repeat, var(--l) 59px 6px / 1px 11px no-repeat, var(--l) 54px 17px / 1px 5px no-repeat; }
.ck { display: inline-block; width: 13px; height: 13px; vertical-align: middle; border: 1px solid #8c8c8c; box-shadow: inset 0 0 0 1px #fff; background: linear-gradient(135deg, #c8ccd4, #f6f7f9); }

.vs { flex: none; display: flex; flex-direction: column; align-items: center; color: #666; }
.cv { width: 10px; height: 8px; flex: none; }
.cv.dn { margin-top: auto; transform: scaleY(-1); }
.thumb { background: #cdcdcd; width: 100%; flex: none; }
.main-vs { width: 16px; background: #f1f1f1; padding: 5px 0 4px; }
.main-vs .thumb { height: 119px; margin-top: 124px; }

.hsplit { flex: none; height: 4px; background: #a9c8f7; display: flex; justify-content: center; }
.grip { width: 100px; height: 4px; padding: 0 9px; display: flex; justify-content: space-between; background: #fff; border-bottom: 1px dotted #000080; }
.grip::before, .grip::after { content: ""; width: 0; height: 0; border: 3px solid transparent; border-top: 4px solid #000080; border-bottom: 0; }
.ybar { flex: none; height: 23px; padding: 4px 0 0 4px; background: linear-gradient(#fbe3a6, #f7de9b); color: #666; }
.ltabs { flex: none; height: 23px; display: flex; padding: 3px 0 0 4px; color: #666; }
.lt { padding: 2px 4px 0; margin-right: 2px; }
.lt.on { background: linear-gradient(#e8eef2, #d8dee4); border: 1px solid #b8d8dc; border-bottom: 0; border-radius: 3px 3px 0 0; padding: 1px 1px 0 2px; margin-right: 6px; }

.lower { flex: none; height: 159px; margin: 0 4px 0 3px; border-top: 3px solid #f2f3f5; display: flex; background: #f0f1f3; box-shadow: inset 0 2px 0 #777; padding-top: 2px; }
.pane { flex: none; display: flex; flex-direction: column; }
.pl { width: 630px; padding: 1px 0 0 2px; }
.combos { display: flex; gap: 2px; height: 21px; flex: none; }
.combo { background: #e3e3e3; border: 1px solid #a8a8a8; display: flex; align-items: center; padding-left: 3px; position: relative; white-space: nowrap; word-spacing: 0; }
.cb1 { width: 122px; } .cb2 { width: 502px; }
.cd { width: 12px; height: 8px; margin-left: auto; margin-right: 4px; color: #555; }
.tree { flex: none; width: 625px; height: 125px; margin-top: 3px; border: 2px solid #7a7a80; background: #fff; display: flex; overflow: hidden; }
.trows { flex: 1; padding-top: 1px; overflow: hidden; background-image: repeating-linear-gradient(#888 0 1px, transparent 1px 2px), repeating-linear-gradient(#888 0 1px, transparent 1px 2px), repeating-linear-gradient(#888 0 1px, transparent 1px 2px); background-size: 1px 100%, 1px 106px, 1px 41px; background-position: 12px 0, 31px 0, 50px 0; background-repeat: no-repeat; }
.tn { height: 16px; display: flex; align-items: center; white-space: nowrap; color: #111; word-spacing: 0; }
.d3 { padding-left: 45px; } .d2 { padding-left: 26px; } .d1 { padding-left: 8px; }
.ex { width: 9px; height: 9px; flex: none; margin-right: 6px; border: 1px solid #8a8a9a; font: 9px/7px "Liberation Sans", sans-serif; text-align: center; color: #224; background: #f2f2f6; }
.ex.no { border: 0; background: none; }
.fd { width: 15px; height: 15px; flex: none; margin-right: 5px; }
.tn i.s { font-size: 12px; }
.sel { background: #0078d7; color: #fff; height: 16px; padding: 0 2px; margin-left: -2px; line-height: 15px; }
.tree-vs { width: 16px; margin: 1px 2px 1px 0; background: #f0f0f0; padding: 5px 0; }
.tree-vs .thumb { height: 21px; margin-top: 24px; }
.tree-vs .cv, .list-vs .cv { width: 10px; }

.vsplit { flex: none; width: 4px; background: #a9c8f7; display: flex; flex-direction: column; padding-top: 30px; margin-top: 1px; }
.gripv { display: flex; flex-direction: column; justify-content: space-between; width: 4px; height: 84px; background: #fff; border-right: 1px dotted #000080; }
.gripv::before, .gripv::after { content: ""; width: 0; height: 0; border: 3px solid transparent; border-left: 3px solid #000080; border-right: 0; }
.pm { width: 627px; padding-top: 1px; }
.searchrow { flex: none; height: 22px; display: flex; align-items: center; }
.slabel { width: 39px; padding-left: 2px; color: #111; }
.sinput { width: 559px; height: 21px; background: #fff; border: 1px solid #777; display: flex; align-items: center; }
.sbtn { width: 25px; height: 21px; margin-left: 2px; display: flex; align-items: center; justify-content: center; background: linear-gradient(#f4f6f9, #dde1e8); border: 1px solid #c0c4cc; border-radius: 3px; }
.listbox { flex: none; width: 626px; height: 125px; margin-top: 2px; border: 1px solid #888; display: flex; background: #eceef4; overflow: hidden; }
.listwrap { flex: 1; overflow: hidden; }
.lst { width: 607px; table-layout: fixed; border-collapse: collapse; word-spacing: 0; color: #111; }
.l1 { width: 81px; } .l2 { width: 240px; } .l3 { width: 40px; } .l4 { width: 80px; }
.lst th { height: 24px; font-weight: normal; color: #333; background: linear-gradient(#fafafa, #dcdcde); border-right: 1px solid #bbb; border-bottom: 2px solid #bbb; padding: 0; }
.lst th:nth-child(-n+2) { text-align: left; padding-left: 6px; }
.lst th:last-child { border-right: 0; }
.lst td { height: 20px; padding: 0; white-space: nowrap; overflow: hidden; font-size: 12px; }
.lst td:nth-child(1) { padding-left: 9px; font-family: "Liberation Sans", sans-serif; font-size: 11px; }
.lst td:nth-child(2) { padding-left: 6px; word-spacing: 1px; }
.lst td:nth-child(3), .lst td:nth-child(4) { text-align: center; font-family: "Liberation Sans", sans-serif; font-size: 11px; }
.lst i.s { font-size: 11px; }
.list-vs { width: 18px; background: #f0f0f0; padding: 5px 0; }
.list-vs .thumb { height: 17px; margin-top: 9px; }
.pr { flex: 1; padding: 0 2px 0 3px; }
.rtabs { flex: none; height: 23px; padding: 0 0 2px 1px; background: #cfd3dc; display: flex; align-items: flex-end; margin-top: 1px; }
.rt { width: 51px; height: 20px; padding-left: 1px; color: #666; background: linear-gradient(#eef1f4, #d8dce2); border: 1px solid #b8d8dc; border-bottom: 0; border-radius: 3px 3px 0 0; word-spacing: 0; white-space: nowrap; }
.rbox { flex: none; height: 124px; border: 1px solid #777; box-shadow: inset 0 0 0 1px #fff; background: #efefef; display: flex; justify-content: flex-end; }
.r-vs { width: 19px; margin: 2px; padding: 6px 0; color: #bbb; border-left: 1px solid #f8f8f8; }

/* status */
.status { flex: none; height: 23px; display: flex; align-items: center; font-size: 11px; word-spacing: 0; color: #333; background: linear-gradient(#d8dae0 0, #c0c3ca 6px, #a8acb5 8px, #aeb2ba 100%); }
.si { height: 100%; display: flex; align-items: center; padding: 0 11px 0 9px; border-right: 1px solid #888c94; white-space: nowrap; }
.si:nth-child(4) { padding-right: 14px; }
.si i.s { font-size: 11px; }
.tax { margin-left: auto; height: 100%; display: flex; align-items: center; padding-left: 15px; width: 105px; border-left: 1px solid #80848c; white-space: nowrap; font-size: 11px; }
.paybtn { width: 21px; height: 18px; margin-right: 3px; display: flex; align-items: center; justify-content: center; background: #e8eaf0; border: 1px solid #9a9ea8; border-radius: 2px; }

/* key tips */
.kq { position: absolute; left: 12px; top: 19px; display: flex; gap: 4px; }
.kt { display: block; width: 18px; height: 17px; text-align: center; font: 11px/15px "Liberation Sans", sans-serif; color: #333; background: linear-gradient(#fff, #e8e8ea); border: 1px solid #777; border-radius: 2px; }
.kf { opacity: .5; }
.ka { position: absolute; top: 49px; height: 16px; }
.kb { left: 40px; } .kc { left: 137px; } .kqq { left: 233px; } .ks { left: 331px; } .kl { left: 430px; } .km { left: 526px; } .kaa { left: 1901px; top: 48px; }
```
